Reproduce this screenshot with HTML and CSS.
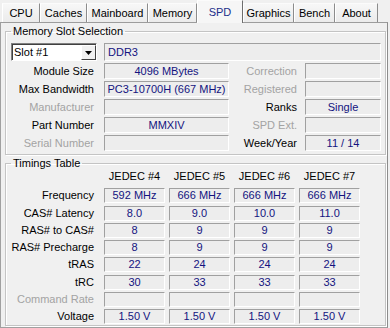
FILE: index.html
```html
<!DOCTYPE html>
<html lang="en">

<head>
  <meta charset="UTF-8">
  <meta name="viewport" content="width=device-width, initial-scale=1.0">
  <title>CPU-Z SPD</title>
  <link rel="stylesheet" href="styles.css">
</head>

<body>
  <div class="window">
    <nav class="tabs">
      <div class="tab">CPU</div>
      <div class="tab">Caches</div>
      <div class="tab">Mainboard</div>
      <div class="tab">Memory</div>
      <div class="tab active">SPD</div>
      <div class="tab">Graphics</div>
      <div class="tab">Bench</div>
      <div class="tab">About</div>
    </nav>

    <div class="page">
      <fieldset class="group">
        <legend>Memory Slot Selection</legend>
        <div class="info">
          <div class="select">
            <span class="select-text">Slot #1</span>
            <span class="select-btn">
              <svg width="7" height="4" viewBox="0 0 7 4"><path d="M0 0h7L3.5 4z" fill="#000"/></svg>
            </span>
          </div>
          <div class="val wide">DDR3</div>

          <div class="label">Module Size</div>
          <div class="val">4096 MBytes</div>
          <div class="label r off">Correction</div>
          <div class="val"></div>

          <div class="label">Max Bandwidth</div>
          <div class="val">PC3-10700H (667 MHz)</div>
          <div class="label r off">Registered</div>
          <div class="val"></div>

          <div class="label off">Manufacturer</div>
          <div class="val"></div>
          <div class="label r">Ranks</div>
          <div class="val">Single</div>

          <div class="label">Part Number</div>
          <div class="val">MMXIV</div>
          <div class="label r off">SPD Ext.</div>
          <div class="val"></div>

          <div class="label off">Serial Number</div>
          <div class="val"></div>
          <div class="label r">Week/Year</div>
          <div class="val">11 / 14</div>
        </div>
      </fieldset>

      <fieldset class="group timings-group">
        <legend>Timings Table</legend>
        <div class="timings">
          <div></div>
          <div class="head">JEDEC #4</div>
          <div class="head">JEDEC #5</div>
          <div class="head">JEDEC #6</div>
          <div class="head">JEDEC #7</div>

          <div class="label">Frequency</div>
          <div class="val">592 MHz</div>
          <div class="val">666 MHz</div>
          <div class="val">666 MHz</div>
          <div class="val">666 MHz</div>

          <div class="label">CAS# Latency</div>
          <div class="val">8.0</div>
          <div class="val">9.0</div>
          <div class="val">10.0</div>
          <div class="val">11.0</div>

          <div class="label">RAS# to CAS#</div>
          <div class="val">8</div>
          <div class="val">9</div>
          <div class="val">9</div>
          <div class="val">9</div>

          <div class="label">RAS# Precharge</div>
          <div class="val">8</div>
          <div class="val">9</div>
          <div class="val">9</div>
          <div class="val">9</div>

          <div class="label">tRAS</div>
          <div class="val">22</div>
          <div class="val">24</div>
          <div class="val">24</div>
          <div class="val">24</div>

          <div class="label">tRC</div>
          <div class="val">30</div>
          <div class="val">33</div>
          <div class="val">33</div>
          <div class="val">33</div>

          <div class="label off">Command Rate</div>
          <div class="val"></div>
          <div class="val"></div>
          <div class="val"></div>
          <div class="val"></div>

          <div class="label">Voltage</div>
          <div class="val">1.50 V</div>
          <div class="val">1.50 V</div>
          <div class="val">1.50 V</div>
          <div class="val">1.50 V</div>
        </div>
      </fieldset>
    </div>
  </div>
</body>

</html>
```

FILE: styles.css
```css
body {
  margin: 0;
  background-color: #f0f0f0;
  font-family: "Liberation Sans", Arial, sans-serif;
  font-size: 11px;
  color: #000;
}

.window {
  width: 388px;
  height: 328px;
  overflow: hidden;
}

/* tab strip */
.tabs {
  display: grid;
  grid-template-columns: 38px 47px 61px 49px 46px 51px 41px 43px;
  align-items: end;
  height: 22px;
  padding-left: 2px;
}

.tab {
  box-sizing: border-box;
  height: 19px;
  line-height: 18px;
  text-align: center;
  white-space: nowrap;
  border-top: 1px solid #fbfbfb;
  border-left: 1px solid #fff;
  border-right: 1px solid #8c8c8c;
  background: linear-gradient(#f7f7f7, #ebebeb);
}

.tab.active {
  position: relative;
  z-index: 1;
  height: 23px;
  margin-bottom: -1px;
  line-height: 22px;
  color: #1b2f8a;
  background: #f6f6f6;
  border-right-color: #6e6e6e;
}

/* page */
.page {
  box-sizing: border-box;
  height: 306px;
  padding: 2px 1px 0 4px;
  border: 1px solid #a0a0a0;
  border-top-color: #9c9c9c;
  border-right-color: #8c8c8c;
}

.group {
  box-sizing: border-box;
  width: 381px;
  margin: 0;
  padding: 5px 3px 3px 5px;
  border: 1px solid #c4c4c4;
  box-shadow: inset 1px 1px #fff, 1px 1px #fff;
}

.group legend {
  padding: 0 2px;
  line-height: 13px;
}

.timings-group {
  margin-top: 2px;
  padding: 0 3px 1px 5px;
}

.info {
  display: grid;
  grid-template-columns: 93px 125px 76px 76px;
  grid-template-rows: 18px repeat(5, 16px);
  row-gap: 2px;
}

.label {
  padding-right: 10px;
  line-height: 16px;
  text-align: right;
  white-space: nowrap;
}

.label.r {
  padding-right: 8px;
}

.off {
  color: #a3a3a3;
}

.val {
  box-sizing: border-box;
  line-height: 14px;
  text-align: center;
  white-space: nowrap;
  overflow: hidden;
  color: #13137f;
  background-color: #ededed;
  border: 1px solid;
  border-color: #a0a0a0 #fff #fff #a0a0a0;
}

.val.wide {
  grid-column: 2 / 5;
  padding-left: 3px;
  line-height: 16px;
  text-align: left;
}

/* slot dropdown */
.select {
  box-sizing: border-box;
  display: flex;
  width: 86px;
  border: 1px solid;
  border-color: #808080 #fff #fff #808080;
  box-shadow: inset 1px 1px #404040;
  background-color: #fff;
}

.select-text {
  flex: 1;
  padding-left: 2px;
  padding-top: 1px;
  line-height: 15px;
}

.select-btn {
  box-sizing: border-box;
  display: flex;
  align-items: center;
  justify-content: center;
  width: 15px;
  margin: 1px 0 0;
  background-color: #f0f0f0;
  border: 1px solid;
  border-color: #fff #404040 #404040 #fff;
}

/* timings */
.timings {
  display: grid;
  grid-template-columns: 89px repeat(4, 61px);
  grid-template-rows: 16px repeat(8, 15px);
  column-gap: 4px;
  row-gap: 2.3px;
}

.timings .label {
  padding-right: 6px;
  line-height: 15px;
}

.timings .val {
  line-height: 13px;
}

.head {
  line-height: 12px;
  text-align: center;
  white-space: nowrap;
}
```
